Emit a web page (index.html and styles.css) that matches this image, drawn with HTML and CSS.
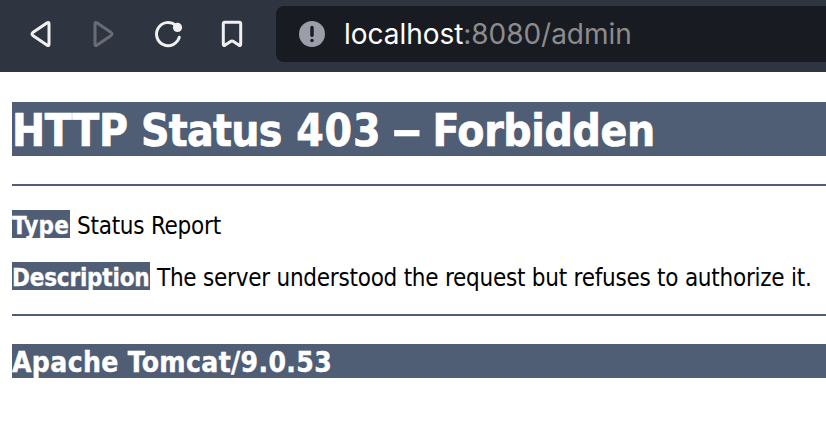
FILE: index.html
```html
<!DOCTYPE html>
<html lang="en">
<head>
<meta charset="utf-8">
<title>HTTP Status 403 – Forbidden</title>
<link rel="stylesheet" href="styles.css">
</head>
<body>
<header class="toolbar">
  <nav class="controls">
    <svg class="icon" viewBox="0 0 32 32"><path d="M23.2 4.8Q25 3.6 25 6V26Q25 28.4 23.2 27.2L8.8 17.4Q7.2 16 8.8 14.6Z"/></svg>
    <svg class="icon icon-disabled" viewBox="0 0 32 32"><path d="M8.8 4.8Q7 3.6 7 6V26Q7 28.4 8.8 27.2L23.2 17.4Q24.8 16 23.2 14.6Z"/></svg>
    <svg class="icon" viewBox="0 0 32 32"><path d="M23.6 7.2A11.6 11.6 0 1 0 27.3 19.2"/><circle class="dot" cx="25.5" cy="9.4" r="4.6"/></svg>
    <svg class="icon" viewBox="0 0 32 32"><path d="M8.8 4.3H23.2Q24.7 4.3 24.7 5.8V26Q24.7 28.2 22.8 27.1L17.4 23.4Q16 22.6 14.6 23.4L9.2 27.1Q7.3 28.2 7.3 26V5.8Q7.3 4.3 8.8 4.3Z"/></svg>
  </nav>
  <div class="address">
    <svg class="info" viewBox="0 0 26 26"><circle cx="13" cy="13" r="13"/><path d="M13 6.4V14.2"/><path d="M13 19.4V19.5"/></svg>
    <span class="url"><span class="host">localhost</span><span class="path">:8080/admin</span></span>
  </div>
</header>
<main class="page">
  <h1><span class="protocol">HTTP </span><span class="status">Status </span><span class="code">403</span> <span class="dash">–</span> <span class="reason">Forbidden</span></h1>
  <hr>
  <p><b class="type">Type</b><span class="report">Status Report</span></p>
  <p><b class="description">Description</b><span class="detail">The server understood the request but refuses to authorize it.</span></p>
  <hr>
  <h3>Apache Tomcat/9.0.53</h3>
</main>
</body>
</html>
```
FILE: styles.css
```css
* { box-sizing: border-box; }
body { margin: 0; background: #fff; color: #000; overflow: hidden; font-family: "DejaVu Sans Condensed", "DejaVu Sans", Tahoma, sans-serif; }
.toolbar { display: flex; height: 72px; padding-top: 6px; background: #2f3441; }
.controls { display: flex; flex: none; align-items: center; gap: 32px; width: 276px; height: 56px; padding-left: 24px; }
.icon { flex: none; width: 32px; height: 32px; fill: none; stroke: #f0f0f0; stroke-width: 3; stroke-linecap: round; stroke-linejoin: round; }
.icon-disabled { stroke: #696c75; }
.icon .dot { fill: #f0f0f0; stroke: none; }
.address { display: flex; flex: 1; align-items: center; height: 56px; padding-left: 23px; background: #191b22; border-radius: 8px 0 0 8px; }
.info { width: 26px; height: 26px; margin-right: 19px; fill: #9b9ea8; stroke: #191b22; stroke-width: 3.4; stroke-linecap: round; }
.info circle { stroke: none; }
.url { font: 28px/56px Inter, sans-serif; letter-spacing: -0.04px; white-space: nowrap; }
.host { color: #fff; }
.path { color: #8c8c8d; }
.page { padding: 30px 0 0 12px; white-space: nowrap; }
h1, h3, .page b { color: #fff; background: #4f5d75; font-weight: bold; }
h1 { margin: 0 0 28px; height: 54px; font-size: 44px; line-height: 58px; -webkit-text-stroke: 0.7px #fff; }
.protocol { letter-spacing: -0.4px; }
.status { margin-right: 1.6px; letter-spacing: -0.7px; }
.code { letter-spacing: 0.8px; }
.dash { display: inline-block; margin: 0 2.2px 0 1.6px; transform: translateY(-1px) scaleX(1.55); }
.reason { letter-spacing: -0.35px; }
hr { height: 2px; margin: 0; border: 0; background: #4f5d75; }
p { display: flex; height: 28px; margin: 24px 0; font-size: 24px; line-height: 32px; }
.page b { flex: none; margin-right: 7px; -webkit-text-stroke: 0.3px #fff; }
.type { width: 58px; letter-spacing: 0.3px; }
.description { width: 138px; letter-spacing: -0.2px; }
.report, .detail { letter-spacing: -0.25px; }
h3 { margin: 28px 0 0; height: 34px; font-size: 28px; line-height: 38px; letter-spacing: 0.37px; -webkit-text-stroke: 0.4px #fff; }
```
